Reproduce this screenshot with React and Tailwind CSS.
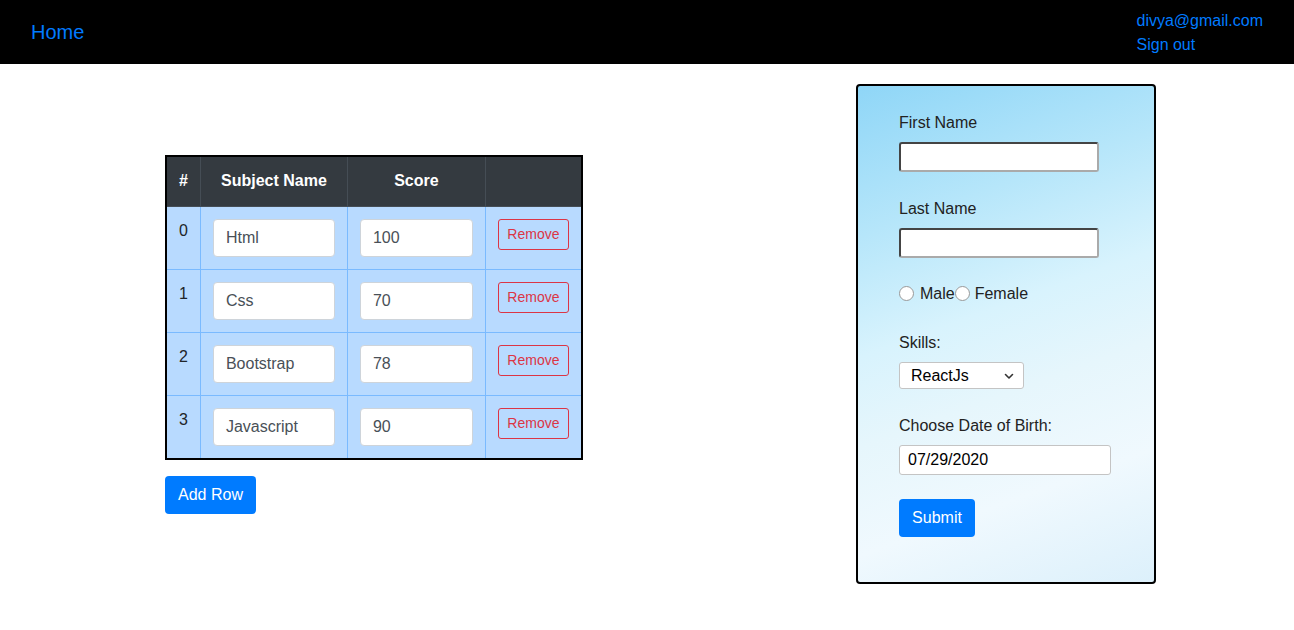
import React from "react";

const rows = [
  { id: 0, name: "Html", score: "100" },
  { id: 1, name: "Css", score: "70" },
  { id: 2, name: "Bootstrap", score: "78" },
  { id: 3, name: "Javascript", score: "90" },
];

export default function App() {
  return (
    <div className="min-h-[630px] bg-white font-['Liberation_Sans',Arial,sans-serif] text-[#212529]">
      <nav className="h-16 bg-black flex items-center justify-between pl-[31px] pr-[31px]">
        <span className="text-[20px] leading-[30px] text-[#007bff]">Home</span>
        <div className="flex flex-col text-[16px] leading-[24px] text-[#007bff] pt-[1px]">
          <span>divya@gmail.com</span>
          <span>Sign out</span>
        </div>
      </nav>

      <div className="flex pl-[165px] pt-[20px]">
        <div className="w-[691px] pt-[71px]">
          <table className="border-collapse border-2 border-black text-[16px] leading-[24px]">
            <thead>
              <tr className="bg-[#343a40] text-white h-[50px]">
                <th className="w-[34px] border border-[#454d55] border-t-0 border-l-0 font-bold text-center align-middle">#</th>
                <th className="w-[147px] border border-[#454d55] border-t-0 font-bold text-center align-middle">Subject Name</th>
                <th className="w-[138px] border border-[#454d55] border-t-0 font-bold text-center align-middle">Score</th>
                <th className="w-[96px] border border-[#454d55] border-t-0 border-r-0"></th>
              </tr>
            </thead>
            <tbody>
              {rows.map((r) => (
                <tr key={r.id} className="bg-[#b8daff]">
                  <td className="border border-[#7abaff] border-l-0 p-3 align-top">{r.id}</td>
                  <td className="border border-[#7abaff] p-3 align-top">
                    <div className="h-[38px] w-full bg-white border border-[#ced4da] rounded-[4px] px-3 flex items-center text-[#495057]">
                      {r.name}
                    </div>
                  </td>
                  <td className="border border-[#7abaff] p-3 align-top">
                    <div className="h-[38px] w-full bg-white border border-[#ced4da] rounded-[4px] px-3 flex items-center text-[#495057]">
                      {r.score}
                    </div>
                  </td>
                  <td className="border border-[#7abaff] border-r-0 p-3 align-top">
                    <button className="h-[31px] w-[71px] border border-[#dc3545] rounded-[3px] text-[#dc3545] text-[14px] leading-[21px] bg-transparent">
                      Remove
                    </button>
                  </td>
                </tr>
              ))}
            </tbody>
          </table>
          <button className="mt-4 h-[38px] w-[91px] bg-[#007bff] text-white rounded-[4px] text-[16px] leading-[24px]">
            Add Row
          </button>
        </div>

        <div className="w-[300px] h-[500px] border-2 border-black rounded-[4px] bg-[linear-gradient(160deg,#8fd6f7_0%,#b6e6fa_25%,#d8f3fd_45%,#e6f6fc_60%,#f0f9fe_78%,#dcf0fb_100%)] pl-[41px] pt-[25px] text-[16px] leading-[24px]">
          <div className="text-[#222]">First Name</div>
          <div className="mt-[7px] w-[200px] h-[30px] bg-white border-2 border-t-[#444] border-l-[#444] border-b-[#aaa] border-r-[#aaa] rounded-[3px]"></div>

          <div className="mt-[25px] text-[#222]">Last Name</div>
          <div className="mt-[7px] w-[200px] h-[30px] bg-white border-2 border-t-[#444] border-l-[#444] border-b-[#aaa] border-r-[#aaa] rounded-[3px]"></div>

          <div className="mt-[24px] flex items-center text-[#222]">
            <span className="w-[15px] h-[15px] rounded-full border border-[#999] bg-white mr-[6px] -mt-[2px]"></span>
            <span>Male</span>
            <span className="w-[15px] h-[15px] rounded-full border border-[#999] bg-white mr-[5px] -mt-[2px]"></span>
            <span>Female</span>
          </div>

          <div className="mt-[25px] text-[#222]">Skills:</div>
          <div className="mt-[7px] w-[125px] h-[27px] bg-white border border-[#c4c4c4] rounded-[3px] flex items-center justify-between pl-[11px] pr-[8px] text-black">
            <span>ReactJs</span>
            <svg width="12" height="12" viewBox="0 0 12 12" fill="none">
              <path d="M2.5 4.5 6 8 9.5 4.5" stroke="#333" strokeWidth="1.6" strokeLinecap="round" strokeLinejoin="round" />
            </svg>
          </div>

          <div className="mt-[25px] text-[#222]">Choose Date of Birth:</div>
          <div className="mt-[7px] w-[212px] h-[30px] bg-white border border-[#c4c4c4] rounded-[3px] flex items-center pl-[8px] text-black">
            07/29/2020
          </div>

          <button className="mt-[24px] h-[38px] w-[76px] bg-[#007bff] text-white rounded-[4px] text-[16px] leading-[24px]">
            Submit
          </button>
        </div>
      </div>
    </div>
  );
}
